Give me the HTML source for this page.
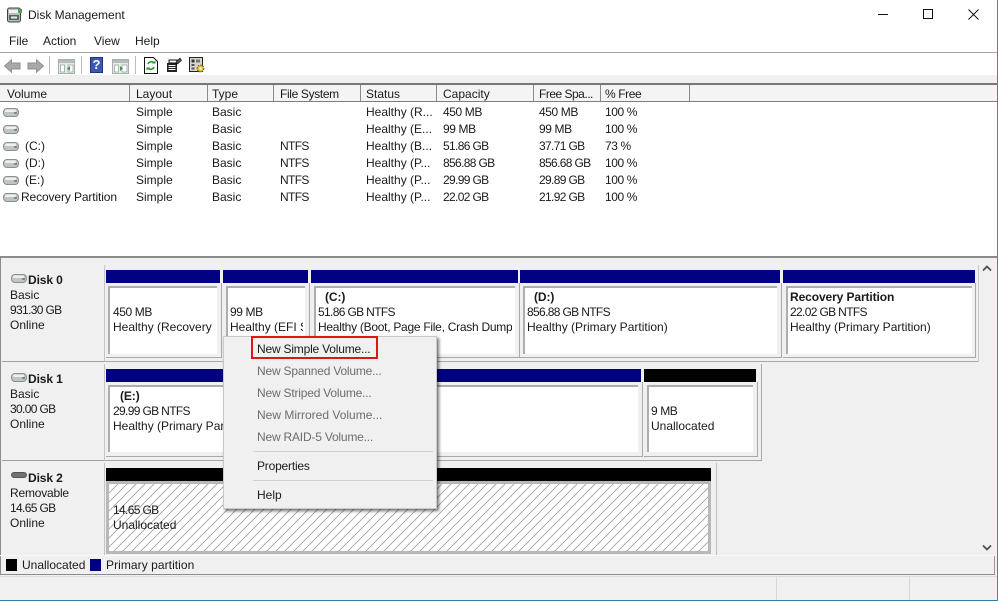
<!DOCTYPE html>
<html><head><meta charset="utf-8"><title>Disk Management</title>
<style>
html,body{margin:0;padding:0}
body{width:998px;height:601px;overflow:hidden;position:relative;background:#fff;font-family:"Liberation Sans",sans-serif;font-size:12px;color:#1a1a1a}
.b{position:absolute;box-sizing:border-box}
.t{position:absolute;white-space:nowrap;line-height:16px;height:16px}
.g{color:#6d6d6d}
.bd{font-weight:bold;letter-spacing:-.1px}
.n{letter-spacing:-.65px}
.m{letter-spacing:-.4px}
.s{letter-spacing:-.2px}
.p{position:absolute;box-sizing:border-box;background:#fff;border-left:2px solid #adadad;border-top:2px solid #adadad}
.f{position:absolute;box-sizing:border-box;border-right:1px solid #a8a8a8;border-bottom:1px solid #a8a8a8}
svg{position:absolute;overflow:visible}
</style></head><body>
<svg width="0" height="0" style="position:absolute"><defs>
<pattern id="h" width="9" height="9" patternUnits="userSpaceOnUse"><path d="M-1 10L10 -1M-1 1L1 -1M8 10L10 8" stroke="#a0a0a0" stroke-width=".85" fill="none"/></pattern>
<g id="d"><rect x="0.5" y="0.5" width="15" height="8" rx="3.5" fill="#c0c4c4" stroke="#8a8e8e"/><rect x="2" y="1.5" width="11" height="2.5" rx="1" fill="#eef0f0"/><rect x="11" y="4" width="3" height="2" fill="#7f8a8a"/></g>
<g id="w"><rect x="0.5" y="0.5" width="16" height="14" fill="#e8ecec" stroke="#a8aeae"/><rect x="1" y="1" width="15" height="3" fill="#b4bcbc"/><rect x="2.5" y="6" width="4" height="7" fill="#fff" stroke="#8f9a9a" stroke-width=".7"/><rect x="10" y="6" width="5" height="7" fill="#fff" stroke="#8f9a9a" stroke-width=".7"/></g>
</defs></svg>

<!-- title -->
<svg style="left:7px;top:7px" width="16" height="16"><rect x="0.5" y="1" width="13" height="14" rx="2" fill="#b8bcbc" stroke="#3c4444"/><rect x="2" y="3" width="9" height="3" fill="#eef0f0"/><rect x="2" y="8" width="10" height="5" fill="#5a6464"/><rect x="4" y="9.5" width="6" height="2" fill="#e4e8e8"/><rect x="11" y="2" width="4" height="4" fill="#4fa14f"/></svg>
<span class="t" style="left:28px;top:7px">Disk Management</span>
<div class="b" style="left:878px;top:14px;width:10px;height:1px;background:#111"></div>
<div class="b" style="left:923px;top:9px;width:10px;height:10px;border:1px solid #111"></div>
<svg style="left:968px;top:9px" width="11" height="11"><path d="M.5 .5L10.5 10.5M10.5 .5L.5 10.5" stroke="#111" fill="none"/></svg>

<!-- menu -->
<span class="t" style="left:9px;top:33px">File</span>
<span class="t" style="left:43px;top:33px">Action</span>
<span class="t" style="left:94px;top:33px">View</span>
<span class="t" style="left:135px;top:33px">Help</span>
<div class="b" style="left:0;top:52px;width:998px;height:1px;background:#a6a6a6"></div>

<!-- toolbar -->
<svg style="left:4px;top:59px" width="17" height="14"><path d="M.5 7L7.5 .8V4H16V10H7.5V13.2Z" fill="#a5a9a9" stroke="#8b8f8f"/></svg>
<svg style="left:27px;top:59px" width="17" height="14"><path d="M16.5 7L9.5 .8V4H1V10H9.5V13.2Z" fill="#a5a9a9" stroke="#8b8f8f"/></svg>
<div class="b" style="left:49px;top:56px;width:1px;height:18px;background:#bdbdbd"></div>
<svg style="left:58px;top:59px" width="17" height="15"><use href="#w"/><path d="M9 9.5L12 7V12Z" fill="#3c9c3c"/></svg>
<div class="b" style="left:81px;top:56px;width:1px;height:18px;background:#bdbdbd"></div>
<div class="b" style="left:90px;top:57px;width:13px;height:16px;background:#3a58b8;border:1px solid #24357e;color:#fff;font-weight:bold;font-size:13px;line-height:14px;text-align:center">?</div>
<svg style="left:112px;top:59px" width="17" height="15"><use href="#w"/><path d="M8 7L11 9.5L8 12Z" fill="#3c9c3c"/></svg>
<div class="b" style="left:135px;top:56px;width:1px;height:18px;background:#bdbdbd"></div>
<svg style="left:144px;top:57px" width="14" height="17"><path d="M.5 .5H9.5L13.5 4.5V16.5H.5Z" fill="#fff" stroke="#111"/><path d="M4 7A3.5 3.5 0 0 1 10 6M10 10A3.5 3.5 0 0 1 4 11" stroke="#1f9a2a" stroke-width="1.6" fill="none"/><path d="M8 6.5H11.5V3.5ZM6 10.5H2.5V13.5Z" fill="#1f9a2a"/></svg>
<svg style="left:166px;top:57px" width="16" height="16"><path d="M1 6H11V15H1Z" fill="#222"/><path d="M3 3H11V6H3Z" fill="#fff" stroke="#111"/><path d="M2.5 8.5H9.5M2.5 10.5H9.5M2.5 12.5H9.5" stroke="#fff"/><path d="M10 5L14 1L15.5 3.5L11.5 7Z" fill="#555" stroke="#111" stroke-width=".6"/></svg>
<svg style="left:189px;top:57px" width="17" height="17"><rect x="0.5" y="0.5" width="13" height="14" fill="#d8d8c8" stroke="#222"/><rect x="2.5" y="2.5" width="3" height="3" fill="#333"/><rect x="7" y="2.5" width="4" height="3" fill="#777"/><rect x="2.5" y="7" width="3" height="2" fill="#555"/><rect x="2.5" y="10.5" width="3" height="2" fill="#555"/><circle cx="11.5" cy="11.5" r="3.4" fill="#e2c22a" stroke="#6c5a10" stroke-dasharray="1.6 1"/><circle cx="11.5" cy="11.5" r="1.2" fill="#fff"/></svg>

<div class="b" style="left:0;top:75px;width:997px;height:9px;background:#f0f0f0"></div>

<!-- list header -->
<div class="b" style="left:0;top:83px;width:997px;height:2px;background:#777"></div>
<div class="b" style="left:0;top:85px;width:997px;height:16px;background:#f4f4f4"></div>
<div class="b" style="left:0;top:101px;width:997px;height:1px;background:#7e7e7e"></div>
<div class="b" style="left:129px;top:85px;width:1px;height:16px;background:#8a8a8a"></div>
<div class="b" style="left:207px;top:85px;width:1px;height:16px;background:#8a8a8a"></div>
<div class="b" style="left:273px;top:85px;width:1px;height:16px;background:#8a8a8a"></div>
<div class="b" style="left:360px;top:85px;width:1px;height:16px;background:#8a8a8a"></div>
<div class="b" style="left:436px;top:85px;width:1px;height:16px;background:#8a8a8a"></div>
<div class="b" style="left:533px;top:85px;width:1px;height:16px;background:#8a8a8a"></div>
<div class="b" style="left:600px;top:85px;width:1px;height:16px;background:#8a8a8a"></div>
<div class="b" style="left:689px;top:85px;width:1px;height:16px;background:#8a8a8a"></div>
<span class="t" style="left:7px;top:86px">Volume</span>
<span class="t" style="left:136px;top:86px">Layout</span>
<span class="t" style="left:212px;top:86px">Type</span>
<span class="t" style="left:280px;top:86px;letter-spacing:-.35px">File System</span>
<span class="t" style="left:366px;top:86px">Status</span>
<span class="t" style="left:443px;top:86px">Capacity</span>
<span class="t m" style="left:539px;top:86px;letter-spacing:-.5px">Free Spa...</span>
<span class="t m" style="left:605px;top:86px">% Free</span>

<!-- rows -->
<svg style="left:3px;top:108px" width="16" height="9"><use href="#d"/></svg>
<svg style="left:3px;top:125px" width="16" height="9"><use href="#d"/></svg>
<svg style="left:3px;top:142px" width="16" height="9"><use href="#d"/></svg>
<svg style="left:3px;top:159px" width="16" height="9"><use href="#d"/></svg>
<svg style="left:3px;top:176px" width="16" height="9"><use href="#d"/></svg>
<svg style="left:3px;top:193px" width="16" height="9"><use href="#d"/></svg>

<span class="t" style="left:136px;top:104px">Simple</span><span class="t" style="left:212px;top:104px">Basic</span><span class="t" style="left:366px;top:104px">Healthy (R...</span><span class="t m" style="left:443px;top:104px">450 MB</span><span class="t m" style="left:539px;top:104px">450 MB</span><span class="t m" style="left:605px;top:104px">100 %</span>
<span class="t" style="left:136px;top:121px">Simple</span><span class="t" style="left:212px;top:121px">Basic</span><span class="t" style="left:366px;top:121px">Healthy (E...</span><span class="t m" style="left:443px;top:121px">99 MB</span><span class="t m" style="left:539px;top:121px">99 MB</span><span class="t m" style="left:605px;top:121px">100 %</span>
<span class="t" style="left:25px;top:138px">(C:)</span><span class="t" style="left:136px;top:138px">Simple</span><span class="t" style="left:212px;top:138px">Basic</span><span class="t n" style="left:280px;top:138px">NTFS</span><span class="t" style="left:366px;top:138px">Healthy (B...</span><span class="t n" style="left:443px;top:138px">51.86 GB</span><span class="t n" style="left:539px;top:138px">37.71 GB</span><span class="t m" style="left:605px;top:138px">73 %</span>
<span class="t" style="left:25px;top:155px">(D:)</span><span class="t" style="left:136px;top:155px">Simple</span><span class="t" style="left:212px;top:155px">Basic</span><span class="t n" style="left:280px;top:155px">NTFS</span><span class="t" style="left:366px;top:155px">Healthy (P...</span><span class="t n" style="left:443px;top:155px">856.88 GB</span><span class="t n" style="left:539px;top:155px">856.68 GB</span><span class="t m" style="left:605px;top:155px">100 %</span>
<span class="t" style="left:25px;top:172px">(E:)</span><span class="t" style="left:136px;top:172px">Simple</span><span class="t" style="left:212px;top:172px">Basic</span><span class="t n" style="left:280px;top:172px">NTFS</span><span class="t" style="left:366px;top:172px">Healthy (P...</span><span class="t n" style="left:443px;top:172px">29.99 GB</span><span class="t n" style="left:539px;top:172px">29.89 GB</span><span class="t m" style="left:605px;top:172px">100 %</span>
<span class="t" style="left:21px;top:189px;letter-spacing:-.12px">Recovery Partition</span><span class="t" style="left:136px;top:189px">Simple</span><span class="t" style="left:212px;top:189px">Basic</span><span class="t n" style="left:280px;top:189px">NTFS</span><span class="t" style="left:366px;top:189px">Healthy (P...</span><span class="t n" style="left:443px;top:189px">22.02 GB</span><span class="t n" style="left:539px;top:189px">21.92 GB</span><span class="t m" style="left:605px;top:189px">100 %</span>

<!-- lower pane -->
<div class="b" style="left:0;top:256px;width:997px;height:2px;background:#8c8c8c"></div>
<div class="b" style="left:0;top:258px;width:997px;height:342px;background:#f0f0f0"></div>
<div class="b" style="left:0;top:258px;width:1px;height:316px;background:#8c8c8c"></div>

<!-- labels -->
<div class="b" style="left:2px;top:265px;width:103px;height:97px;background:#f0f0f0;border-right:1px solid #c4c4c4;border-bottom:1px solid #a0a0a0"></div>
<div class="b" style="left:2px;top:364px;width:103px;height:97px;background:#f0f0f0;border-right:1px solid #c4c4c4;border-bottom:1px solid #a0a0a0"></div>
<div class="b" style="left:2px;top:463px;width:103px;height:93px;background:#f0f0f0;border-right:1px solid #c4c4c4"></div>

<svg style="left:11px;top:274px" width="16" height="9"><use href="#d"/></svg>
<span class="t bd" style="left:28px;top:272px">Disk 0</span>
<span class="t" style="left:10px;top:287px">Basic</span><span class="t n" style="left:10px;top:302px">931.30 GB</span><span class="t" style="left:10px;top:317px">Online</span>
<svg style="left:11px;top:373px" width="16" height="9"><use href="#d"/></svg>
<span class="t bd" style="left:28px;top:371px">Disk 1</span>
<span class="t" style="left:10px;top:386px">Basic</span><span class="t n" style="left:10px;top:401px">30.00 GB</span><span class="t" style="left:10px;top:416px">Online</span>
<svg style="left:11px;top:472px" width="16" height="7"><rect x="0.5" y="0.5" width="15" height="5" rx="2.5" fill="#6e7272" stroke="#555"/></svg>
<span class="t bd" style="left:28px;top:470px">Disk 2</span>
<span class="t s" style="left:10px;top:485px">Removable</span><span class="t n" style="left:10px;top:500px">14.65 GB</span><span class="t" style="left:10px;top:515px">Online</span>

<!-- disk 0 -->
<div class="b" style="left:105px;top:361px;width:874px;height:1px;background:#a8a8a8"></div>
<div class="b" style="left:106px;top:270px;width:114px;height:13px;background:#000080"></div>
<div class="b" style="left:223px;top:270px;width:85px;height:13px;background:#000080"></div>
<div class="b" style="left:311px;top:270px;width:207px;height:13px;background:#000080"></div>
<div class="b" style="left:520px;top:270px;width:260px;height:13px;background:#000080"></div>
<div class="b" style="left:783px;top:270px;width:192px;height:13px;background:#000080"></div>
<div class="f" style="left:106px;top:283px;width:116px;height:75px"></div>
<div class="f" style="left:223px;top:283px;width:87px;height:75px"></div>
<div class="f" style="left:311px;top:283px;width:209px;height:75px"></div>
<div class="f" style="left:520px;top:283px;width:262px;height:75px"></div>
<div class="f" style="left:783px;top:283px;width:193px;height:75px"></div>
<div class="b" style="left:978px;top:265px;width:1px;height:97px;background:#c8c8c8"></div>
<div class="p" style="left:108px;top:286px;width:109px;height:68px"></div>
<div class="p" style="left:226px;top:286px;width:79px;height:68px"></div>
<div class="p" style="left:314px;top:286px;width:201px;height:68px"></div>
<div class="p" style="left:523px;top:286px;width:254px;height:68px"></div>
<div class="p" style="left:786px;top:286px;width:186px;height:68px"></div>

<span class="t m" style="left:113px;top:304px">450 MB</span><span class="t" style="left:113px;top:319px;width:103px;overflow:hidden">Healthy (Recovery Partition)</span>
<span class="t m" style="left:230px;top:304px">99 MB</span><span class="t" style="left:230px;top:319px;width:73px;overflow:hidden">Healthy (EFI System)</span>
<span class="t bd" style="left:325px;top:289px">(C:)</span><span class="t n" style="left:318px;top:304px">51.86 GB NTFS</span><span class="t" style="left:318px;top:319px;width:194px;overflow:hidden;letter-spacing:-.27px">Healthy (Boot, Page File, Crash Dump)</span>
<span class="t bd" style="left:534px;top:289px">(D:)</span><span class="t n" style="left:527px;top:304px">856.88 GB NTFS</span><span class="t" style="left:527px;top:319px">Healthy (Primary Partition)</span>
<span class="t bd" style="left:790px;top:289px">Recovery Partition</span><span class="t n" style="left:790px;top:304px">22.02 GB NTFS</span><span class="t" style="left:790px;top:319px">Healthy (Primary Partition)</span>

<!-- disk 1 -->
<div class="b" style="left:106px;top:369px;width:535px;height:13px;background:#000080"></div>
<div class="b" style="left:644px;top:369px;width:112px;height:13px;background:#000"></div>
<div class="f" style="left:106px;top:382px;width:537px;height:75px"></div>
<div class="f" style="left:644px;top:382px;width:114px;height:75px"></div>
<div class="b" style="left:105px;top:460px;width:657px;height:1px;background:#a8a8a8"></div>
<div class="b" style="left:761px;top:364px;width:1px;height:97px;background:#a8a8a8"></div>
<div class="p" style="left:108px;top:385px;width:530px;height:67px"></div>
<div class="p" style="left:647px;top:385px;width:106px;height:67px"></div>
<span class="t bd" style="left:120px;top:388px">(E:)</span><span class="t n" style="left:113px;top:403px">29.99 GB NTFS</span><span class="t" style="left:113px;top:418px;width:112px;overflow:hidden">Healthy (Primary Partition)</span>
<span class="t m" style="left:651px;top:403px">9 MB</span><span class="t" style="left:651px;top:418px">Unallocated</span>

<!-- disk 2 -->
<div class="b" style="left:106px;top:468px;width:605px;height:13px;background:#000"></div>
<div class="b" style="left:106px;top:481px;width:605px;height:73px;background:#b8b8b8"></div>
<div class="b" style="left:716px;top:463px;width:1px;height:93px;background:#c0c0c0"></div>
<svg style="left:109px;top:484px" width="599" height="67"><rect width="599" height="67" fill="#fff"/><rect width="599" height="67" fill="url(#h)"/></svg>
<span class="t n" style="left:113px;top:502px">14.65 GB</span><span class="t" style="left:113px;top:517px">Unallocated</span>

<!-- scrollbar -->
<svg style="left:982px;top:265px" width="10" height="7"><path d="M1 5.5L5 1.5L9 5.5" stroke="#505050" stroke-width="1.8" fill="none"/></svg>
<svg style="left:982px;top:544px" width="10" height="7"><path d="M1 1.5L5 5.5L9 1.5" stroke="#505050" stroke-width="1.8" fill="none"/></svg>

<!-- legend -->
<div class="b" style="left:0;top:555px;width:995px;height:1px;background:#fafafa"></div>
<div class="b" style="left:6px;top:559px;width:11px;height:12px;background:#000"></div>
<span class="t" style="left:22px;top:557px">Unallocated</span>
<div class="b" style="left:90px;top:559px;width:11px;height:12px;background:#000080"></div>
<span class="t" style="left:106px;top:557px;letter-spacing:.06px">Primary partition</span>
<div class="b" style="left:994px;top:556px;width:1px;height:18px;background:#9a9a9a"></div>
<div class="b" style="left:0;top:574px;width:995px;height:1px;background:#8c8c8c"></div>
<div class="b" style="left:0;top:576px;width:997px;height:1px;background:#dcdcdc"></div>
<div class="b" style="left:776px;top:577px;width:1px;height:23px;background:#d8d8d8"></div>
<div class="b" style="left:909px;top:577px;width:1px;height:23px;background:#d8d8d8"></div>

<!-- context menu -->
<div class="b" style="left:223px;top:336px;width:214px;height:173px;background:#f0f0f0;border:1px solid #c8c8c8;box-shadow:2px 2px 3px rgba(0,0,0,.55)"></div>
<div class="b" style="left:251px;top:336px;width:127px;height:23px;border:2px solid #e0141c"></div>
<span class="t s" style="left:257px;top:341px">New Simple Volume...</span>
<span class="t g s" style="left:257px;top:363px">New Spanned Volume...</span>
<span class="t g s" style="left:257px;top:385px">New Striped Volume...</span>
<span class="t g" style="left:257px;top:407px">New Mirrored Volume...</span>
<span class="t g s" style="left:257px;top:429px">New RAID-5 Volume...</span>
<div class="b" style="left:253px;top:451px;width:180px;height:1px;background:#d0d0d0"></div>
<span class="t s" style="left:257px;top:458px">Properties</span>
<div class="b" style="left:253px;top:480px;width:180px;height:1px;background:#d0d0d0"></div>
<span class="t" style="left:257px;top:487px">Help</span>

<!-- window edge -->
<div class="b" style="left:0;top:600px;width:998px;height:1px;background:#2f7fa8"></div>
<div class="b" style="left:997px;top:0;width:1px;height:601px;background:#3a8ab4"></div>
</body></html>
